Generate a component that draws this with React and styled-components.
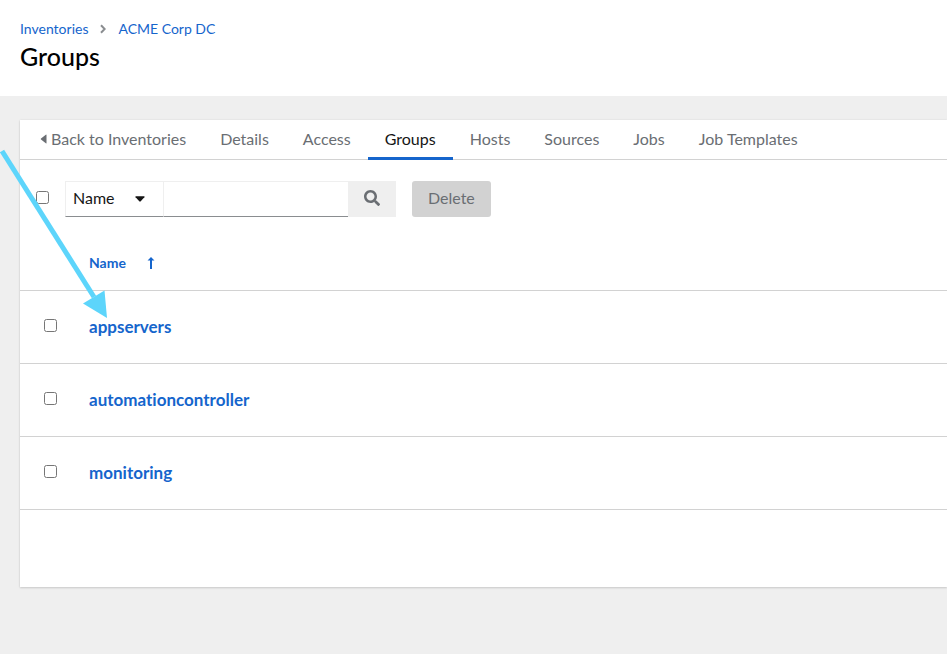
import React from "react";
import styled, { createGlobalStyle } from "styled-components";

const Global = createGlobalStyle`
  *, *::before, *::after { box-sizing: border-box; }
  body {
    margin: 0;
    background: #efefef;
    color: #151515;
    font-family: Lato, "Open Sans", sans-serif;
    font-size: 16px;
    font-variant-ligatures: none;
    line-height: 24px;
  }
  button, input, select { font: inherit; color: inherit; }
`;

const Page = styled.div`
  position: relative;
`;

const Header = styled.header`
  padding: 18px 20px 24px;
  background: #fff;
`;

const Breadcrumb = styled.nav`
  display: flex;
  align-items: center;
  gap: 12px;
  font-size: 14px;
  line-height: 22px;
`;

const Crumb = styled.a`
  color: #1565cc;
  text-decoration: none;
`;

const Title = styled.h1`
  margin: 0;
  font-size: 25px;
  font-weight: 500;
  line-height: 32px;
  color: #000;
`;

const Main = styled.main`
  padding: 24px 0 24px 20px;
`;

const Card = styled.section`
  padding-bottom: 77px;
  background: #fff;
  box-shadow: 0 1px 2px rgba(3, 3, 3, 0.14), 0 0 2px rgba(3, 3, 3, 0.08);
`;

const Tabs = styled.nav`
  display: flex;
  height: 40px;
  padding-left: 3px;
  border-bottom: 1px solid #d2d2d2;
`;

const Tab = styled.a`
  display: flex;
  align-items: center;
  gap: 4px;
  height: 40px;
  padding: 1px 17px 0;
  border-bottom: 3px solid ${(p) => (p.$active ? "#1565cc" : "transparent")};
  color: ${(p) => (p.$active ? "#151515" : "#6a6e73")};
  text-decoration: none;
  white-space: nowrap;
`;

const Toolbar = styled.form`
  display: flex;
  align-items: center;
  gap: 16px;
  padding: 21px 16px 19px;
`;

const Checkbox = styled.input.attrs({ type: "checkbox" })`
  display: block;
  width: 13px;
  height: 13px;
  margin: 0 0 3px;
`;

const SearchGroup = styled.div`
  display: flex;
  height: 36px;
`;

const SelectBox = styled.label`
  display: grid;
  align-items: center;
  width: 99px;
  border: 1px solid #efefef;
  border-bottom-color: #8a8d90;

  select, svg { grid-area: 1 / 1; }
  svg { justify-self: end; margin-right: 18px; pointer-events: none; }
`;

const Select = styled.select`
  width: 100%;
  height: 100%;
  padding: 0 7px 2px;
  border: 0;
  background: transparent;
  appearance: none;
`;

const SearchInput = styled.input`
  width: 184px;
  padding: 0 8px;
  border: 1px solid #efefef;
  border-width: 1px 0;
  border-bottom-color: #8a8d90;
  border-radius: 0;
  background: #fff;
`;

const SearchButton = styled.button`
  display: grid;
  place-items: center;
  width: 48px;
  padding: 0 0 2px;
  border: 0;
  background: #efefef;
  color: #6a6e73;
`;

const DeleteButton = styled.button`
  height: 36px;
  padding: 0 16px 2px;
  border: 0;
  border-radius: 3px;
  background: #d2d2d2;
  color: #6a6e73;
`;

const Table = styled.table`
  width: 100%;
  border-collapse: collapse;
  text-align: left;

  tr { border-bottom: 1px solid #d2d2d2; }
  th, td { height: 73px; padding: 0; vertical-align: middle; }
  thead th, thead td { height: 54px; }
`;

const SelectCell = styled.td`
  width: 69px;

  && { padding-left: 24px; }
`;

const SortButton = styled.button`
  display: flex;
  align-items: center;
  gap: 21px;
  padding: 0;
  border: 0;
  background: transparent;
  color: #1565cc;
  font-size: 14px;
  font-weight: 700;
`;

const GroupLink = styled.a`
  color: #1565cc;
  font-size: 17px;
  font-weight: 700;
  text-decoration: none;
`;

const Pointer = styled.svg`
  position: absolute;
  top: 0;
  left: 0;
  pointer-events: none;
`;

const tabs = ["Details", "Access", "Groups", "Hosts", "Sources", "Jobs", "Job Templates"];
const groups = ["appservers", "automationcontroller", "monitoring"];

export default function App() {
  return (
    <Page>
      <Global />
      <Header>
        <Breadcrumb aria-label="Breadcrumb">
          <Crumb href="#inventories">Inventories</Crumb>
          <svg width="6" height="10" viewBox="0 0 6 10" aria-hidden="true">
            <path d="M1 1.2 4.7 5 1 8.8" fill="none" stroke="#8a8d90" strokeWidth="2" />
          </svg>
          <Crumb href="#acme-corp-dc">ACME Corp DC</Crumb>
        </Breadcrumb>
        <Title>Groups</Title>
      </Header>
      <Main>
        <Card>
          <Tabs aria-label="Inventory sections">
            <Tab href="#inventories">
              <svg width="7" height="10" viewBox="0 0 7 10" aria-hidden="true">
                <path d="M6.5 1v8Q6.500 9.800 5.800 9.200L1 5.600Q.4 5 1 4.400L5.800.8Q6.500.2 6.500 1Z" fill="currentColor" />
              </svg>
              Back to Inventories
            </Tab>
            {tabs.map((name) => (
              <Tab
                key={name}
                href={`#${name.toLowerCase().replace(" ", "-")}`}
                $active={name === "Groups"}
                aria-current={name === "Groups" ? "page" : undefined}
              >
                {name}
              </Tab>
            ))}
          </Tabs>
          <Toolbar onSubmit={(e) => e.preventDefault()}>
            <Checkbox aria-label="Select all" />
            <SearchGroup>
              <SelectBox>
                <Select aria-label="Filter by">
                  <option>Name</option>
                </Select>
                <svg width="10" height="6" viewBox="0 0 10 6" aria-hidden="true">
                  <path d="M1 .3H9Q10 .4 9.400 1.200L5.700 5.300Q5 6 4.300 5.300L.6 1.200Q0 .4 1 .3Z" fill="#151515" />
                </svg>
              </SelectBox>
              <SearchInput type="search" aria-label="Search text" />
              <SearchButton type="submit" aria-label="Search">
                <svg width="16" height="16" viewBox="0 0 512 512" aria-hidden="true">
                  <path
                    fill="currentColor"
                    d="M505 442.7L405.3 343c-4.500-4.500-10.600-7-17-7H372c27.600-35.300 44-79.700 44-128C416 93.100 322.900 0 208 0S0 93.100 0 208s93.100 208 208 208c48.300 0 92.700-16.400 128-44v16.300c0 6.400 2.500 12.500 7 17l99.700 99.700c9.400 9.400 24.600 9.400 33.900 0l28.300-28.300c9.400-9.400 9.400-24.600.1-34zM208 336c-70.700 0-128-57.200-128-128 0-70.700 57.200-128 128-128 70.700 0 128 57.200 128 128 0 70.700-57.200 128-128 128z"
                  />
                </svg>
              </SearchButton>
            </SearchGroup>
            <DeleteButton type="button" disabled>Delete</DeleteButton>
          </Toolbar>
          <Table>
            <thead>
              <tr>
                <SelectCell />
                <th scope="col" aria-sort="ascending">
                  <SortButton type="button">
                    Name
                    <svg width="8" height="12" viewBox="0 0 8 12" aria-hidden="true">
                      <path d="M4 0 7.500 3.600H5V12H3V3.600H.5Z" fill="currentColor" />
                    </svg>
                  </SortButton>
                </th>
              </tr>
            </thead>
            <tbody>
              {groups.map((name) => (
                <tr key={name}>
                  <SelectCell>
                    <Checkbox aria-label={`Select ${name}`} />
                  </SelectCell>
                  <td>
                    <GroupLink href={`#${name}`}>{name}</GroupLink>
                  </td>
                </tr>
              ))}
            </tbody>
          </Table>
        </Card>
      </Main>
      <Pointer width="110" height="320" viewBox="0 0 110 320" aria-hidden="true">
        <path d="M2 151 94 297" stroke="#5dd5fb" strokeWidth="5" />
        <path d="M83 303.500 104.500 290.500 107 318Z" fill="#5dd5fb" />
      </Pointer>
    </Page>
  );
}
